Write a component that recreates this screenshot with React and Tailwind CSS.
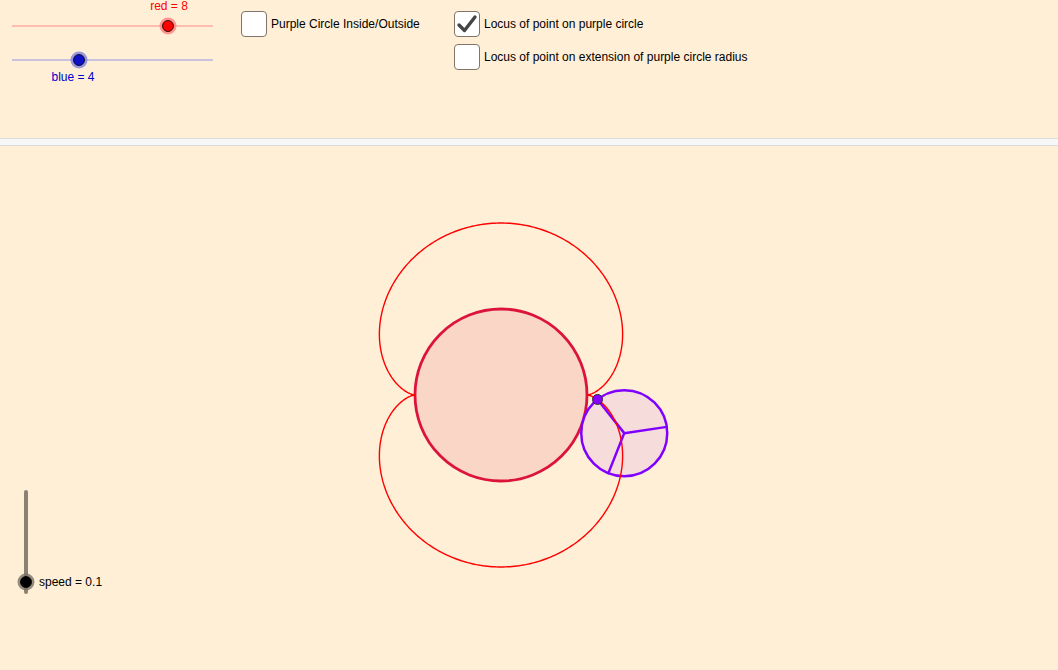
import React from 'react';

const font = { fontFamily: '"Liberation Sans", Arial, sans-serif' };

// nephroid / epicycloid locus, page coordinates
function locusPath(cx, cy, R, r) {
  const k = (R + r) / r;
  let d = '';
  for (let i = 0; i <= 720; i++) {
    const t = (i / 720) * Math.PI * 2;
    const x = cx + (R + r) * Math.cos(t) - r * Math.cos(k * t);
    const y = cy + (R + r) * Math.sin(t) - r * Math.sin(k * t);
    d += (i === 0 ? 'M' : 'L') + x.toFixed(2) + ' ' + y.toFixed(2) + ' ';
  }
  return d;
}

function Checkbox({ checked, label }) {
  return (
    <div className="flex items-center gap-[4px]">
      <div className="w-[26px] h-[26px] rounded-[4px] border-[1.5px] border-[#807568] bg-white flex items-center justify-center shrink-0">
        {checked && (
          <svg width="22" height="22" viewBox="0 0 22 22">
            <path d="M3 12 L8.5 17.5 L19 4" fill="none" stroke="#454545" strokeWidth="3.4" strokeLinecap="round" strokeLinejoin="round" />
          </svg>
        )}
      </div>
      <span className="text-[12px] text-black whitespace-nowrap">{label}</span>
    </div>
  );
}

function Sliders() {
  return (
    <svg width="241" height="90" className="shrink-0">
      <line x1="12" y1="26" x2="213" y2="26" stroke="#ff8a8a" strokeWidth="1" />
      <circle cx="168" cy="26" r="8.5" fill="#ff8080" opacity="0.8" />
      <circle cx="168" cy="26" r="5.5" fill="#ff0000" stroke="#000" strokeWidth="0.8" />
      <text x="169" y="10" textAnchor="middle" fontSize="12" fill="#ff0000" style={font}>red = 8</text>

      <line x1="12" y1="60" x2="213" y2="60" stroke="#9494e6" strokeWidth="1" />
      <circle cx="79" cy="60" r="8.5" fill="#8080e0" opacity="0.8" />
      <circle cx="79" cy="60" r="5.5" fill="#1010c8" stroke="#000" strokeWidth="0.8" />
      <text x="73" y="81" textAnchor="middle" fontSize="12" fill="#0000cc" style={font}>blue = 4</text>
    </svg>
  );
}

export default function App() {
  const cx = 501, cy = 395, R = 86, r = 43;
  const phi = (17.2 * Math.PI) / 180;
  const pcx = cx + (R + r) * Math.cos(phi);
  const pcy = cy + (R + r) * Math.sin(phi);
  const a0 = 3 * phi;
  const px = pcx - r * Math.cos(a0);
  const py = pcy - r * Math.sin(a0);
  const base = Math.atan2(py - pcy, px - pcx);
  const spokes = [0, 1, 2].map(i => {
    const a = base + (i * 2 * Math.PI) / 3;
    return [pcx + r * Math.cos(a), pcy + r * Math.sin(a)];
  });

  return (
    <div className="w-[1058px] h-[670px] bg-[#ffefd6] flex flex-col overflow-hidden" style={font}>
      {/* top panel */}
      <div className="h-[138px] flex items-start shrink-0">
        <Sliders />
        <div className="pt-[11px] w-[213px] shrink-0">
          <Checkbox label="Purple Circle Inside/Outside" />
        </div>
        <div className="pt-[11px] flex flex-col gap-[7px]">
          <Checkbox checked label="Locus of point on purple circle" />
          <Checkbox label="Locus of point on extension of purple circle radius" />
        </div>
      </div>

      <div className="h-[8px] shrink-0 bg-[#f7f7f7] border-y border-[#dcdcdc]" />

      {/* graphics view */}
      <div className="flex-1 relative">
        <svg width="1058" height="524" viewBox="0 146 1058 524" className="block">
          <circle cx={cx} cy={cy} r={R} fill="#f9d6c6" stroke="#dc143c" strokeWidth="2.8" />
          <circle cx={pcx} cy={pcy} r={r} fill="#f7dcdc" stroke="#8000ff" strokeWidth="2.5" />
          {spokes.map(([x, y], i) => (
            <line key={i} x1={pcx} y1={pcy} x2={x} y2={y} stroke="#8000ff" strokeWidth="2.5" strokeLinecap="round" />
          ))}
          <path d={locusPath(cx, cy, R, r)} fill="none" stroke="#ff0000" strokeWidth="1.4" />
          <circle cx={px} cy={py} r="5" fill="#8a00ff" stroke="#222" strokeWidth="0.9" />

          {/* speed slider */}
          <line x1="26" y1="492" x2="26" y2="592" stroke="#8b8275" strokeWidth="4" strokeLinecap="round" />
          <circle cx="26" cy="582" r="8.5" fill="#7a7268" opacity="0.8" />
          <circle cx="26" cy="582" r="5.5" fill="#000" stroke="#000" strokeWidth="0.8" />
          <text x="39" y="586" fontSize="12" fill="#000" style={font}>speed = 0.1</text>
        </svg>
      </div>
    </div>
  );
}
